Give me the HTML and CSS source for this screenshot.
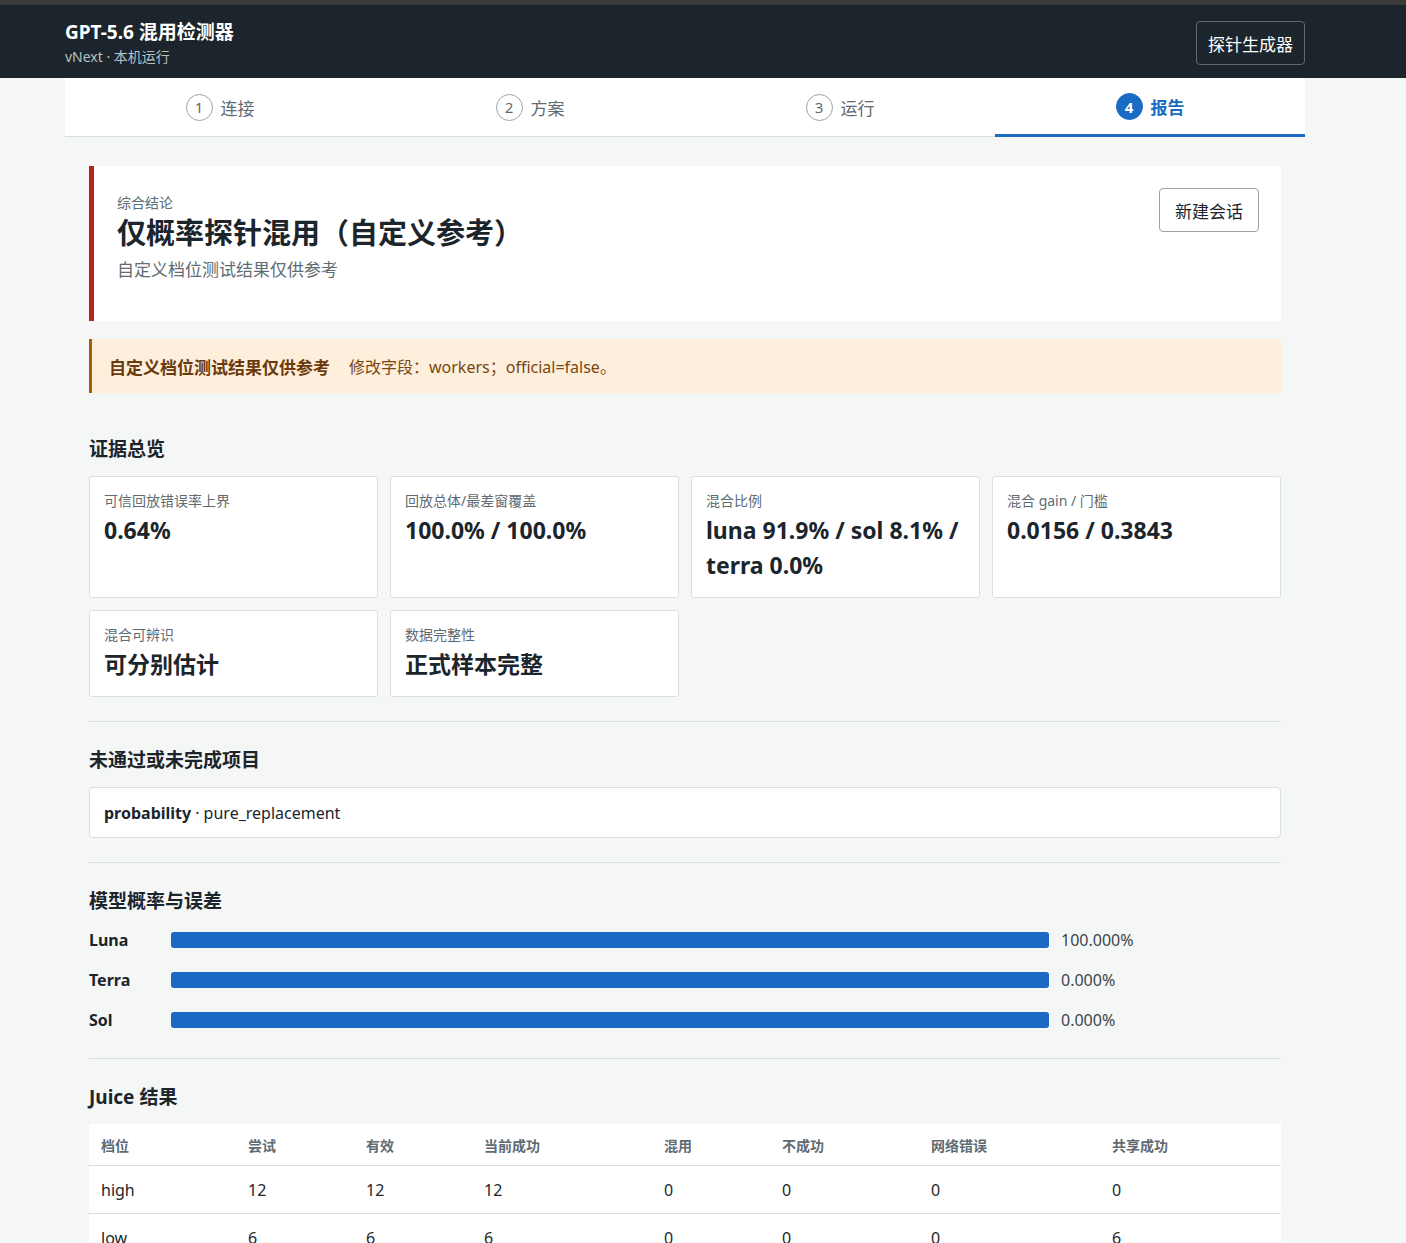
FILE: index.html
```html
<!DOCTYPE html>
<html lang="zh-CN">
<head>
  <meta charset="UTF-8">
  <meta name="viewport" content="width=device-width, initial-scale=1.0">
  <title>GPT-5.6 混用检测器</title>
  <link rel="stylesheet" href="styles.css">
</head>
<body>
  <div class="topstrip"></div>
  <header class="topbar">
    <div class="brand">
      <h1>GPT-5.6 混用检测器</h1>
      <p>vNext · 本机运行</p>
    </div>
    <button class="btn-dark">探针生成器</button>
  </header>

  <!-- 步骤 -->
  <nav class="steps">
    <div class="step"><span class="step-num">1</span>连接</div>
    <div class="step"><span class="step-num">2</span>方案</div>
    <div class="step"><span class="step-num">3</span>运行</div>
    <div class="step active"><span class="step-num">4</span>报告</div>
  </nav>

  <main class="container">
    <section class="verdict">
      <div class="verdict-text">
        <p class="eyebrow">综合结论</p>
        <h2>仅概率探针混用（自定义参考）</h2>
        <p class="verdict-sub">自定义档位测试结果仅供参考</p>
      </div>
      <button class="btn-light">新建会话</button>
    </section>

    <div class="notice">
      <strong>自定义档位测试结果仅供参考</strong>
      <span>修改字段：workers；official=false。</span>
    </div>

    <section class="section first">
      <h3>证据总览</h3>
      <div class="metrics">
        <div class="metric">
          <div class="metric-label">可信回放错误率上界</div>
          <div class="metric-value">0.64%</div>
        </div>
        <div class="metric">
          <div class="metric-label">回放总体/最差窗覆盖</div>
          <div class="metric-value">100.0% / 100.0%</div>
        </div>
        <div class="metric">
          <div class="metric-label">混合比例</div>
          <div class="metric-value">luna 91.9% / sol 8.1% / terra 0.0%</div>
        </div>
        <div class="metric">
          <div class="metric-label">混合 gain / 门槛</div>
          <div class="metric-value">0.0156 / 0.3843</div>
        </div>
        <div class="metric">
          <div class="metric-label">混合可辨识</div>
          <div class="metric-value">可分别估计</div>
        </div>
        <div class="metric">
          <div class="metric-label">数据完整性</div>
          <div class="metric-value">正式样本完整</div>
        </div>
      </div>
    </section>

    <section class="section">
      <h3>未通过或未完成项目</h3>
      <div class="issue"><strong>probability</strong> · pure_replacement</div>
    </section>

    <section class="section">
      <h3>模型概率与误差</h3>
      <div class="bars">
        <div class="bar-row">
          <span class="bar-name">Luna</span>
          <div class="bar-track"><div class="bar-fill" style="width: 100%"></div></div>
          <span class="bar-value">100.000%</span>
        </div>
        <div class="bar-row">
          <span class="bar-name">Terra</span>
          <div class="bar-track"><div class="bar-fill" style="width: 100%"></div></div>
          <span class="bar-value">0.000%</span>
        </div>
        <div class="bar-row">
          <span class="bar-name">Sol</span>
          <div class="bar-track"><div class="bar-fill" style="width: 100%"></div></div>
          <span class="bar-value">0.000%</span>
        </div>
      </div>
    </section>

    <section class="section">
      <h3>Juice 结果</h3>
      <table class="results">
        <colgroup>
          <col class="c1"><col class="c2"><col class="c3"><col class="c4">
          <col class="c5"><col class="c6"><col class="c7"><col class="c8">
        </colgroup>
        <thead>
          <tr>
            <th>档位</th><th>尝试</th><th>有效</th><th>当前成功</th>
            <th>混用</th><th>不成功</th><th>网络错误</th><th>共享成功</th>
          </tr>
        </thead>
        <tbody>
          <tr>
            <td>high</td><td>12</td><td>12</td><td>12</td>
            <td>0</td><td>0</td><td>0</td><td>0</td>
          </tr>
          <tr>
            <td>low</td><td>6</td><td>6</td><td>6</td>
            <td>0</td><td>0</td><td>0</td><td>6</td>
          </tr>
        </tbody>
      </table>
    </section>
  </main>
</body>
</html>
```

FILE: styles.css
```css
body {
  font-family: "Noto Sans", "Noto Sans CJK SC", sans-serif;
  margin: 0;
  padding: 0;
  background-color: #f5f7f7;
  color: #1b252b;
}
h1, h2, h3, p {
  margin: 0;
}
button {
  font-family: inherit;
  cursor: pointer;
}
.topstrip {
  height: 5px;
  background-color: #3b3b3b;
}
.topbar {
  background-color: #1b252b;
  color: #fff;
  padding: 15px 101px 12px 65px;
  display: flex;
  justify-content: space-between;
  align-items: center;
}
.brand h1 {
  font-size: 19px;
  line-height: 24px;
  font-weight: 700;
}
.brand p {
  margin-top: 4px;
  font-size: 14px;
  line-height: 18px;
  color: #b7c0c5;
}
.btn-dark {
  height: 44px;
  padding: 0 11px;
  background: transparent;
  color: #fff;
  border: 1px solid #5f6b73;
  border-radius: 4px;
  font-size: 17px;
}
.steps {
  margin: 0 101px 0 65px;
  background-color: #fff;
  display: grid;
  grid-template-columns: repeat(4, 1fr);
  border-bottom: 1px solid #d9dee0;
}
.step {
  height: 58px;
  display: flex;
  justify-content: center;
  align-items: center;
  gap: 8px;
  font-size: 17px;
  color: #5f6b73;
  box-sizing: border-box;
}
.step-num {
  width: 27px;
  height: 27px;
  box-sizing: border-box;
  border: 1px solid #9aa3a8;
  border-radius: 50%;
  display: flex;
  justify-content: center;
  align-items: center;
  font-size: 15px;
}
.step.active {
  color: #1a6bc4;
  font-weight: 700;
  border-bottom: 3px solid #1a6bc4;
  padding-top: 1px;
  margin-bottom: -1px;
  height: 59px;
}
.step.active .step-num {
  background-color: #1a6bc4;
  border-color: #1a6bc4;
  color: #fff;
}
.container {
  margin: 0 125px 0 89px;
  padding: 29px 0 40px;
}
.verdict {
  background-color: #fff;
  border-left: 5px solid #b3261e;
  padding: 22px 22px 39px 23px;
  display: flex;
  justify-content: space-between;
  align-items: flex-start;
}
.verdict-text {
  padding-top: 6px;
}
.eyebrow {
  font-size: 14px;
  line-height: 18px;
  color: #5f6b73;
  margin-bottom: 2px;
}
.verdict h2 {
  font-size: 29px;
  line-height: 38px;
  font-weight: 700;
}
.verdict-sub {
  margin-top: 6px;
  font-size: 17px;
  line-height: 24px;
  color: #5f6b73;
}
.btn-light {
  width: 100px;
  height: 44px;
  background-color: #fff;
  color: #1b252b;
  border: 1px solid #9aa3a8;
  border-radius: 4px;
  font-size: 17px;
}
.notice {
  margin-top: 18px;
  background-color: #fdefdc;
  border-left: 3px solid #a85b0b;
  padding: 0 17px;
  height: 54px;
  display: flex;
  align-items: center;
  gap: 19px;
  font-size: 16px;
  color: #7a4611;
}
.notice strong {
  font-size: 17px;
  color: #6b3a0c;
}
.section {
  border-top: 1px solid #d9dee0;
  padding: 25px 0 24px;
}
.section.first {
  border-top: none;
  padding-top: 43px;
}
.section h3 {
  font-size: 19px;
  line-height: 26px;
  font-weight: 700;
  margin-bottom: 14px;
}
.metrics {
  display: grid;
  grid-template-columns: repeat(4, 1fr);
  gap: 12px 12px;
}
.metric {
  background-color: #fff;
  border: 1px solid #d9dee0;
  border-radius: 3px;
  padding: 15px 14px 14px;
}
.metric-label {
  font-size: 14px;
  line-height: 18px;
  color: #5f6b73;
  margin-bottom: 3px;
}
.metric-value {
  font-size: 23px;
  line-height: 35px;
  font-weight: 700;
}
.issue {
  background-color: #fff;
  border: 1px solid #d9dee0;
  border-radius: 4px;
  padding: 0 14px;
  height: 49px;
  display: flex;
  align-items: center;
  font-size: 16px;
  gap: 4px;
}
.issue strong {
  font-weight: 700;
}
.bars {
  display: flex;
  flex-direction: column;
  gap: 16px;
  padding-bottom: 2px;
}
.bar-row {
  display: grid;
  grid-template-columns: 70px 1fr 220px;
  gap: 12px;
  align-items: center;
  height: 24px;
}
.bar-name {
  font-size: 16px;
  font-weight: 700;
}
.bar-track {
  height: 16px;
}
.bar-fill {
  height: 100%;
  background-color: #1a69c2;
  border-radius: 3px;
}
.bar-value {
  font-size: 16px;
  color: #3b464d;
}
.results {
  width: 100%;
  border-collapse: collapse;
  background-color: #fff;
  table-layout: fixed;
}
.c1 { width: 147px; }
.c2 { width: 118px; }
.c3 { width: 118px; }
.c4 { width: 180px; }
.c5 { width: 118px; }
.c6 { width: 149px; }
.c7 { width: 181px; }
.c8 { width: 181px; }
.results th {
  text-align: left;
  font-size: 14px;
  font-weight: 700;
  color: #5f6b73;
  height: 41px;
  padding: 0 12px;
  border-bottom: 1px solid #d9dee0;
}
.results td {
  font-size: 16px;
  height: 47px;
  padding: 0 12px;
  border-bottom: 1px solid #d9dee0;
}
```
